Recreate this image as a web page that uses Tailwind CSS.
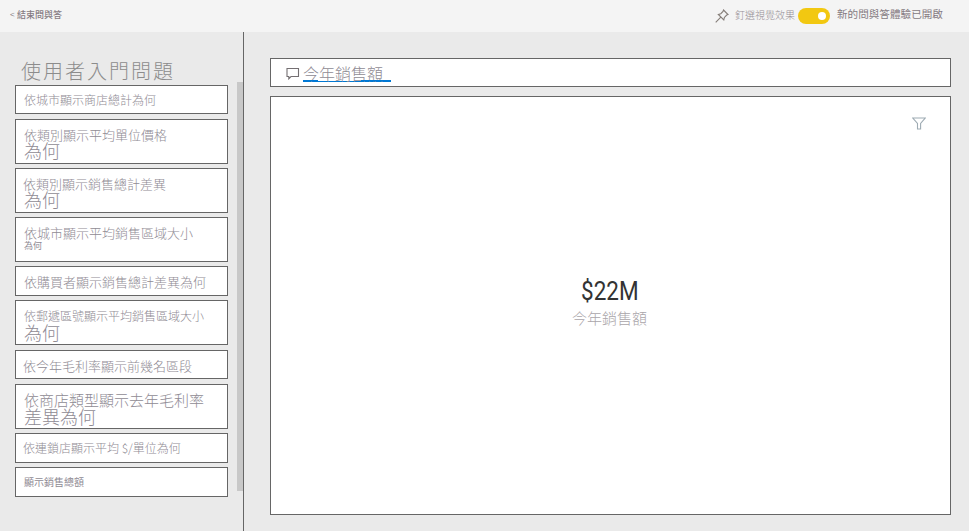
<!DOCTYPE html>
<html lang="zh-Hant">
<head>
<meta charset="utf-8">
<title>問與答</title>
<script src="https://cdn.jsdelivr.net/npm/@tailwindcss/browser@4"></script>
</head>
<body class="w-[969px] h-[531px] overflow-hidden flex flex-col bg-[#eaeaea] font-['Noto_Sans_CJK_TC',sans-serif] font-light text-[#8f8b94] whitespace-nowrap">
<header class="h-8 shrink-0 bg-[#f4f4f4] flex items-start text-[#857b82]">
  <div class="ml-[10px] mt-[7px] flex text-[9px] leading-4 font-medium"><span class="w-[7px] font-['Liberation_Sans',sans-serif] text-[8px]">&lt;</span><span>結束問與答</span></div>
  <svg class="ml-auto mt-[9px] w-[14px] h-[14px] shrink-0" viewBox="0 0 14 14" fill="none" stroke="#857d78" stroke-width="1.1"><path d="M8.5 1 13 5.5 11.7 6 9.4 8.4 8.8 11 3.3 5.5 5.8 4.7 8 2.4ZM5.8 8.2 .7 13.3"/></svg>
  <span class="ml-[6px] mt-[7px] w-[63px] text-[10px] leading-4 text-[#969096]">釘選視覺效果</span>
  <span class="mt-2 w-8 h-4 rounded-full bg-[#f2c811] flex items-center justify-end pr-1"><i class="w-2 h-2 rounded-full bg-white"></i></span>
  <span class="ml-[7px] mt-[6px] w-[132px] text-[10.6px] leading-4 font-normal">新的問與答體驗已開啟</span>
</header>
<div class="flex flex-1 min-h-0">
  <aside class="w-[244px] border-r border-[#666] flex">
    <div class="w-[213px] ml-[15px] mr-[9px] shrink-0">
      <h1 class="h-[53px] pt-[25px] pl-[6px] text-[20px] leading-[28px] tracking-[2px] text-[#8c8c8c]">使用者入門問題</h1>
      <div class="flex flex-col">
        <div class="h-[29px] border border-[#666] bg-white pl-2 pt-[6px] text-[12px] leading-4">依城市顯示商店總計為何</div>
        <div class="h-[45px] mt-[5px] border border-[#666] bg-white pl-2 pt-2 text-[13px] leading-[14px]"><p>依類別顯示平均單位價格</p><p class="text-[18px] leading-[17px]">為何</p></div>
        <div class="h-[45px] mt-1 border border-[#666] bg-white pl-2 pt-2 text-[13px] leading-[14px]"><p class="-ml-px">依類別顯示銷售總計差異</p><p class="text-[18px] leading-[17px]">為何</p></div>
        <div class="h-[45px] mt-1 border border-[#666] bg-white pl-2 pt-2 text-[13px] leading-[14px]"><p>依城市顯示平均銷售區域大小</p><p class="text-[9px] leading-[11px] font-normal">為何</p></div>
        <div class="h-[30px] mt-1 border border-[#666] bg-white pl-2 pt-[7px] text-[13px] leading-4">依購買者顯示銷售總計差異為何</div>
        <div class="h-[45px] mt-1 border border-[#666] bg-white pl-2 pt-[7px] text-[12px] leading-4"><p>依郵遞區號顯示平均銷售區域大小</p><p class="text-[18px]">為何</p></div>
        <div class="h-[29px] mt-[5px] border border-[#666] bg-white pl-[7px] pt-[7px] text-[13px] leading-4">依今年毛利率顯示前幾名區段</div>
        <div class="h-[45px] mt-[5px] border border-[#666] bg-white pl-2 pt-[7px] text-[15px] leading-4"><p>依商店類型顯示去年毛利率</p><p class="text-[18px]">差異為何</p></div>
        <div class="h-[30px] mt-1 border border-[#666] bg-white pl-[7px] pt-[6px] text-[12px] leading-4">依連鎖店顯示平均 $/單位為何</div>
        <div class="h-[30px] mt-1 border border-[#666] bg-white pl-2 pt-[6px] text-[10px] leading-4 font-normal">顯示銷售總額</div>
      </div>
    </div>
    <div class="w-[6px] h-[409px] mt-[50px] shrink-0 bg-[#c8c8c8]"></div>
  </aside>
  <main class="w-[681px] ml-[26px] pt-[26px] pb-4 flex flex-col gap-[9px]">
    <div class="h-[29px] shrink-0 border border-[#666] bg-white flex items-start pl-[15px]">
      <svg class="w-[14px] h-[13px] mt-[8px]" viewBox="0 0 14 13" fill="none" stroke="#746f72" stroke-width="1.1"><path d="M1 1.5H12.5V9.5H5L2.8 11.8V9.5H1Z"/></svg>
      <div class="ml-[3px] mt-[5px] w-[88px]">
        <div class="h-[16px] text-[16px] leading-[18px]">今年銷售額</div>
        <div class="h-px flex justify-between"><i class="w-[15px] bg-[#0078d4]"></i><i class="w-[30px] bg-[#0078d4]"></i></div>
        <div class="h-px bg-[#0078d4]"></div>
      </div>
    </div>
    <section class="flex-1 border border-[#666] bg-white flex flex-col">
      <svg class="w-[14px] h-[13px] mt-[20px] mr-[24px] self-end shrink-0" viewBox="0 0 14 13" fill="none" stroke="#9eabb3" stroke-width="1.1"><path d="M.8 1H13.2L8.6 6.5V12H5.5V6.5Z"/></svg>
      <div class="mt-[146px] ml-[310px] w-[64px] origin-left scale-x-90 text-[25px] leading-8 font-['Roboto',sans-serif] font-normal text-[#333]">$22M</div>
      <div class="mt-0 pl-[301px] text-[15px] leading-5 text-[#aaa6aa]">今年銷售額</div>
    </section>
  </main>
</div>
</body>
</html>
